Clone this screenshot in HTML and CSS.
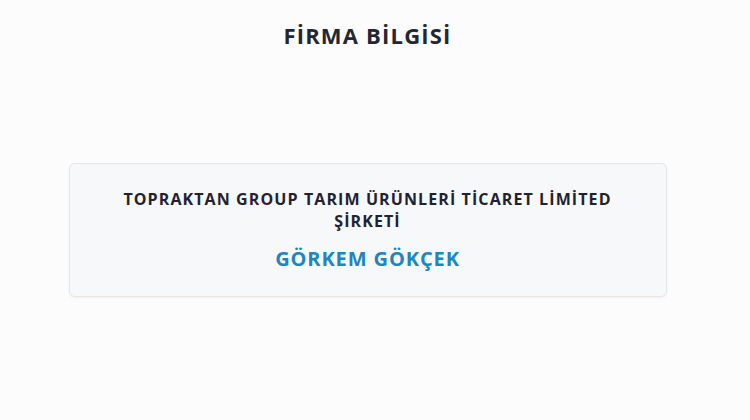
FILE: index.html
```html
<!DOCTYPE html>
<html lang="tr">
<head>
<meta charset="utf-8">
<link rel="stylesheet" href="styles.css">
</head>
<body>
<main class="page">
  <h1 class="title">FİRMA BİLGİSİ</h1>
  <section class="card">
    <p class="company">TOPRAKTAN GROUP TARIM ÜRÜNLERİ TİCARET LİMİTED ŞİRKETİ</p>
    <p class="person">GÖRKEM GÖKÇEK</p>
  </section>
</main>
</body>
</html>
```
FILE: styles.css
```css
html, body {
  margin: 0;
  padding: 0;
  background: #fcfcfc;
}
body {
  font-family: "Open Sans", "Liberation Sans", sans-serif;
  width: 750px;
  height: 420px;
  overflow: hidden;
}
.page {
  width: 735px;
  display: flex;
  flex-direction: column;
  align-items: center;
  padding-top: 20px;
}
.title {
  margin: 0;
  font-size: 22px;
  font-weight: 700;
  color: #232733;
  line-height: 30px;
  letter-spacing: 1.2px;
}
.card {
  margin-top: 113px;
  width: 598px;
  box-sizing: border-box;
  height: 134px;
  background: #f7f8fa;
  border: 1px solid #e4e7ec;
  border-radius: 6px;
  box-shadow: 0 1px 3px rgba(0,0,0,0.05);
  display: flex;
  flex-direction: column;
  align-items: center;
  padding: 24px 30px 0;
  text-align: center;
}
.company {
  margin: 0;
  font-size: 16px;
  font-weight: 700;
  line-height: 22px;
  color: #1f2330;
  letter-spacing: 1.1px;
  max-width: 520px;
}
.person {
  margin: 14px 0 0;
  font-size: 20px;
  font-weight: 700;
  color: #1b86c2;
  line-height: 26px;
  letter-spacing: 0.9px;
}
```
